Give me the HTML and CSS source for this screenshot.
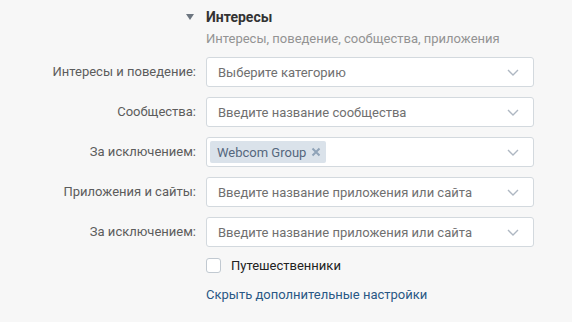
FILE: index.html
```html
<!DOCTYPE html>
<html lang="ru">
<head>
<meta charset="utf-8">
<link rel="stylesheet" href="styles.css">
</head>
<body>
<div class="panel">
  <div class="form">
    <div class="tri-cell"><span class="tri"></span></div>
    <div class="head">
      <div class="title">Интересы</div>
      <div class="subtitle">Интересы, поведение, сообщества, приложения</div>
    </div>

    <div class="label">Интересы и поведение:</div>
    <div class="select"><span class="ph">Выберите категорию</span><svg class="chev" width="12" height="7" viewBox="0 0 12 7"><path d="M1 1l5 5 5-5" fill="none" stroke="#aeb7c2" stroke-width="1.4"/></svg></div>

    <div class="label">Сообщества:</div>
    <div class="select"><span class="ph">Введите название сообщества</span><svg class="chev" width="12" height="7" viewBox="0 0 12 7"><path d="M1 1l5 5 5-5" fill="none" stroke="#aeb7c2" stroke-width="1.4"/></svg></div>

    <div class="label">За исключением:</div>
    <div class="select tokens"><span class="token">Webcom Group<svg class="x" width="10" height="10" viewBox="0 0 10 10"><path d="M1.5 1.5l7 7M8.5 1.5l-7 7" stroke="#8fa3b8" stroke-width="2"/></svg></span><svg class="chev" width="12" height="7" viewBox="0 0 12 7"><path d="M1 1l5 5 5-5" fill="none" stroke="#aeb7c2" stroke-width="1.4"/></svg></div>

    <div class="label">Приложения и сайты:</div>
    <div class="select"><span class="ph">Введите название приложения или сайта</span><svg class="chev" width="12" height="7" viewBox="0 0 12 7"><path d="M1 1l5 5 5-5" fill="none" stroke="#aeb7c2" stroke-width="1.4"/></svg></div>

    <div class="label">За исключением:</div>
    <div class="select"><span class="ph">Введите название приложения или сайта</span><svg class="chev" width="12" height="7" viewBox="0 0 12 7"><path d="M1 1l5 5 5-5" fill="none" stroke="#aeb7c2" stroke-width="1.4"/></svg></div>

    <div></div>
    <label class="check"><span class="box"></span>Путешественники</label>

    <div></div>
    <a class="link" href="#">Скрыть дополнительные настройки</a>
  </div>
</div>
</body>
</html>
```
FILE: styles.css
```css
html, body {
  margin: 0;
  padding: 0;
  background: #f7f7f7;
}
body {
  font-family: Roboto, "Noto Sans", Arial, sans-serif;
  font-size: 13px;
  color: #222;
  width: 572px;
  height: 322px;
  overflow: hidden;
}
.panel {
  padding-top: 8px;
}
.form {
  display: grid;
  grid-template-columns: 196px 328px;
  column-gap: 10px;
  row-gap: 10px;
  align-items: center;
}
.tri-cell {
  align-self: start;
  display: flex;
  justify-content: flex-end;
  padding-right: 2px;
  padding-top: 6px;
}
.tri {
  width: 0;
  height: 0;
  border-left: 4px solid transparent;
  border-right: 4px solid transparent;
  border-top: 6px solid #6d7680;
}
.head {
  margin-bottom: 0;
}
.title {
  font-weight: 700;
  font-size: 14px;
  color: #333;
  line-height: 18px;
}
.subtitle {
  color: #939393;
  line-height: 16px;
  margin-top: 5px;
}
.label {
  text-align: right;
  color: #5c5c5c;
  line-height: 16px;
}
.select {
  box-sizing: border-box;
  height: 30px;
  background: #fff;
  border: 1px solid #d3d9de;
  border-radius: 3px;
  display: flex;
  align-items: center;
  padding: 0 14px 0 11px;
}
.ph {
  flex: 1;
  color: #707070;
}
.chev {
  flex: none;
  margin-top: 1px;
}
.tokens {
  padding-left: 3px;
}
.token {
  flex: none;
  margin-right: auto;
  display: flex;
  align-items: center;
  gap: 5px;
  height: 22px;
  padding: 0 5px 0 7px;
  background: #dae2ea;
  border-radius: 2px;
  color: #55677d;
}
.check {
  display: flex;
  align-items: center;
  gap: 10px;
  color: #222;
  height: 20px;
  margin-top: -2px;
}
.box {
  box-sizing: border-box;
  width: 15px;
  height: 15px;
  border: 1px solid #c1c9d1;
  border-radius: 3px;
  background: #fff;
}
.link {
  color: #2a5885;
  text-decoration: none;
  line-height: 18px;
  margin-top: 1px;
}
```
